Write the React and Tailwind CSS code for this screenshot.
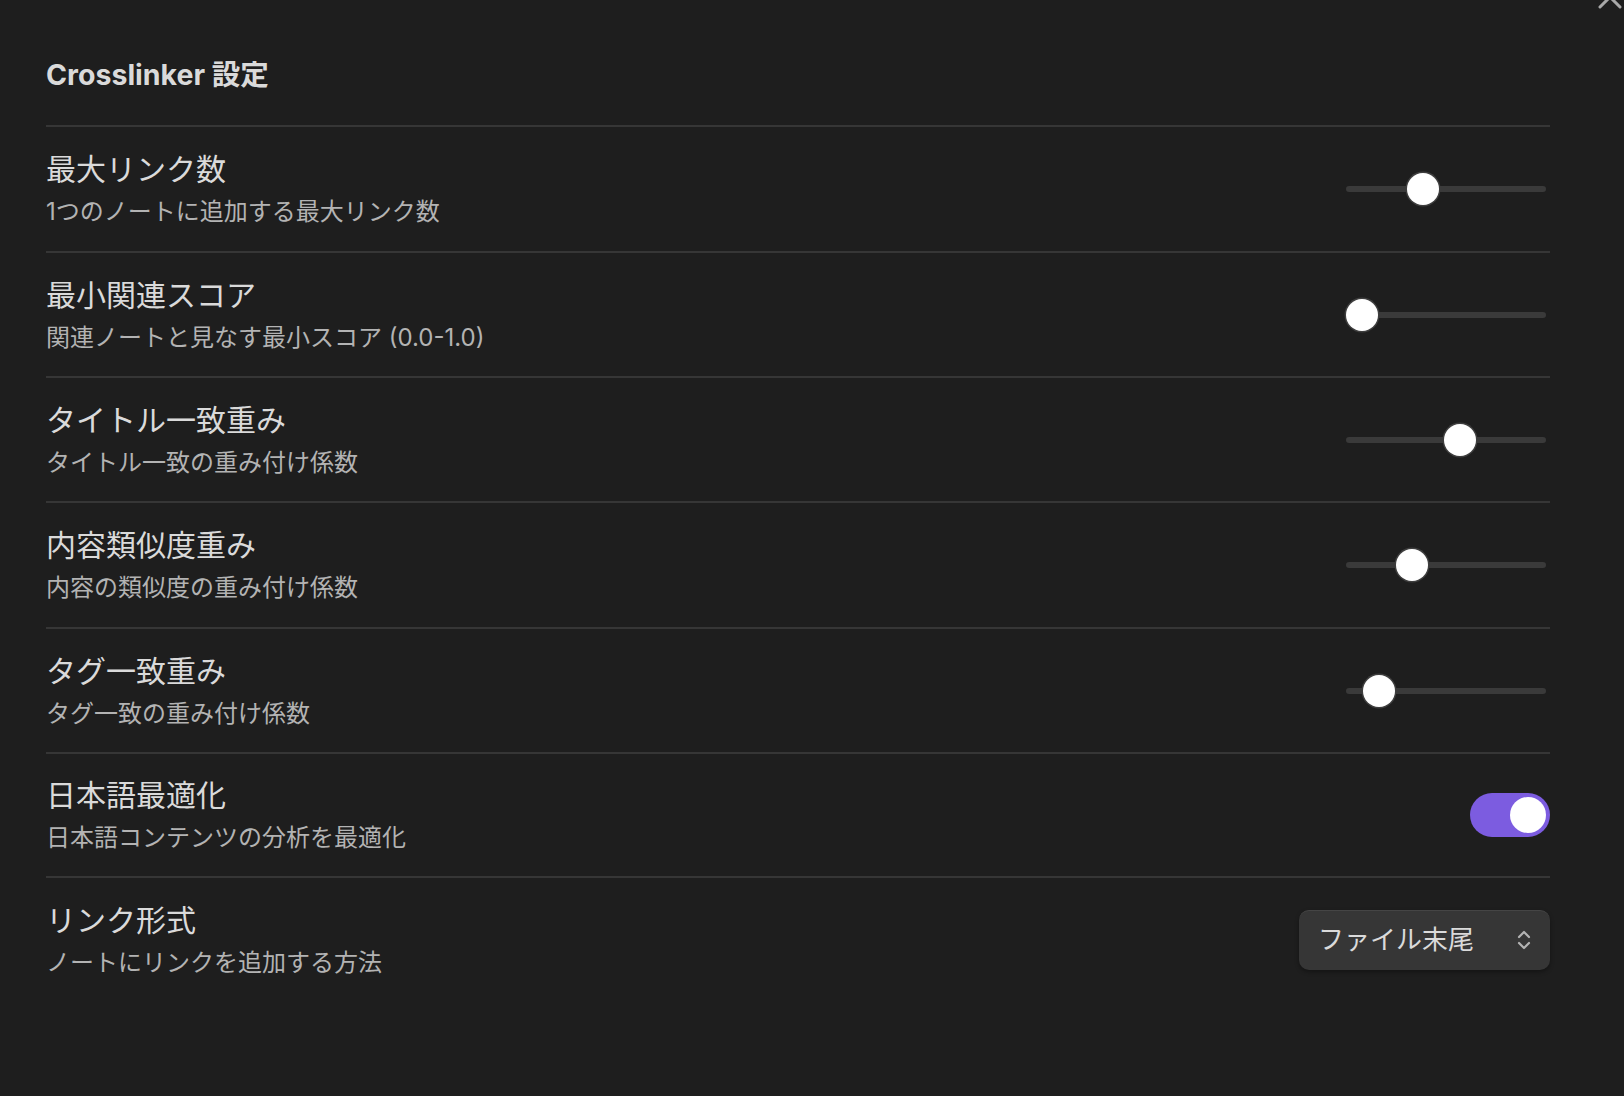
import React from 'react';

const FONT = 'font-[Inter,"Noto_Sans_CJK_JP",sans-serif]';

// 設定項目の定義（h は行の高さ、区切り線の位置合わせ用）
const settings = [
  { name: '最大リンク数', desc: '1つのノートに追加する最大リンク数', type: 'slider', value: 0.363, h: 'h-[126px]' },
  { name: '最小関連スコア', desc: '関連ノートと見なす最小スコア (0.0-1.0)', type: 'slider', value: 0, h: 'h-[125px]' },
  { name: 'タイトル一致重み', desc: 'タイトル一致の重み付け係数', type: 'slider', value: 0.583, h: 'h-[125px]' },
  { name: '内容類似度重み', desc: '内容の類似度の重み付け係数', type: 'slider', value: 0.296, h: 'h-[126px]' },
  { name: 'タグ一致重み', desc: 'タグ一致の重み付け係数', type: 'slider', value: 0.099, h: 'h-[125px]' },
  { name: '日本語最適化', desc: '日本語コンテンツの分析を最適化', type: 'toggle', value: true, h: 'h-[124px]' },
  { name: 'リンク形式', desc: 'ノートにリンクを追加する方法', type: 'dropdown', value: 'ファイル末尾', h: 'h-[125px]' },
];

const Slider = ({ value }) => (
  <div className="relative w-[200px] h-[34px] mr-[4px] flex items-center">
    <div className="w-full h-[6px] rounded-full bg-[#3a3a3a]" />
    <div
      className="absolute top-[1px] w-[32px] h-[32px] rounded-full bg-white shadow-[0_0_0_1.5px_#3e3e3e]"
      style={{ left: value * 168 }}
    />
  </div>
);

const Toggle = ({ on }) => (
  <div className={`w-[80px] h-[44px] rounded-full flex items-center px-[4px] ${on ? 'bg-[#7c5ce0] justify-end' : 'bg-[#3a3a3a] justify-start'}`}>
    <div className="w-[36px] h-[36px] rounded-full bg-white" />
  </div>
);

const Dropdown = ({ value }) => (
  <div className="w-[251px] h-[60px] rounded-[10px] bg-[#363636] border-t border-[#454545] shadow-[0_2px_4px_rgba(0,0,0,0.35)] flex items-center justify-between pl-[19px] pr-[18px]">
    <span className="text-[26px] leading-[34px] text-[#dadada]">{value}</span>
    <svg width="16" height="22" viewBox="0 0 16 22" fill="none" stroke="#b3b3b3" strokeWidth="2.2" strokeLinecap="round" strokeLinejoin="round">
      <path d="M3 8 L8 3 L13 8" />
      <path d="M3 14 L8 19 L13 14" />
    </svg>
  </div>
);

const SettingRow = ({ item }) => (
  <div className={`${item.h} border-t-2 border-[#363636] flex items-center justify-between`}>
    <div className="pt-[3px]">
      <div className="text-[30px] leading-[36px] text-[#dadada]">{item.name}</div>
      <div className="mt-[7px] text-[24px] leading-[36px] text-[#b3b3b3]">{item.desc}</div>
    </div>
    {item.type === 'slider' && <Slider value={item.value} />}
    {item.type === 'toggle' && <Toggle on={item.value} />}
    {item.type === 'dropdown' && <Dropdown value={item.value} />}
  </div>
);

export default function App() {
  return (
    <div className={`relative w-full h-[1096px] overflow-hidden bg-[#1e1e1e] ${FONT}`}>
      {/* 閉じるボタン（上端で切れている） */}
      <svg className="absolute left-[1597px] top-[-16px]" width="26" height="26" viewBox="0 0 26 26" fill="none" stroke="#a8a8a8" strokeWidth="3" strokeLinecap="round">
        <path d="M3 3 L23 23" />
        <path d="M23 3 L3 23" />
      </svg>

      <div className="pl-[46px] pr-[74px]">
        <div className="h-[125px] pt-[58px]">
          <h2 className="text-[28.5px] leading-[34px] font-bold text-[#dadada]">Crosslinker 設定</h2>
        </div>
        {settings.map((item, i) => (
          <SettingRow key={i} item={item} />
        ))}
      </div>
    </div>
  );
}
